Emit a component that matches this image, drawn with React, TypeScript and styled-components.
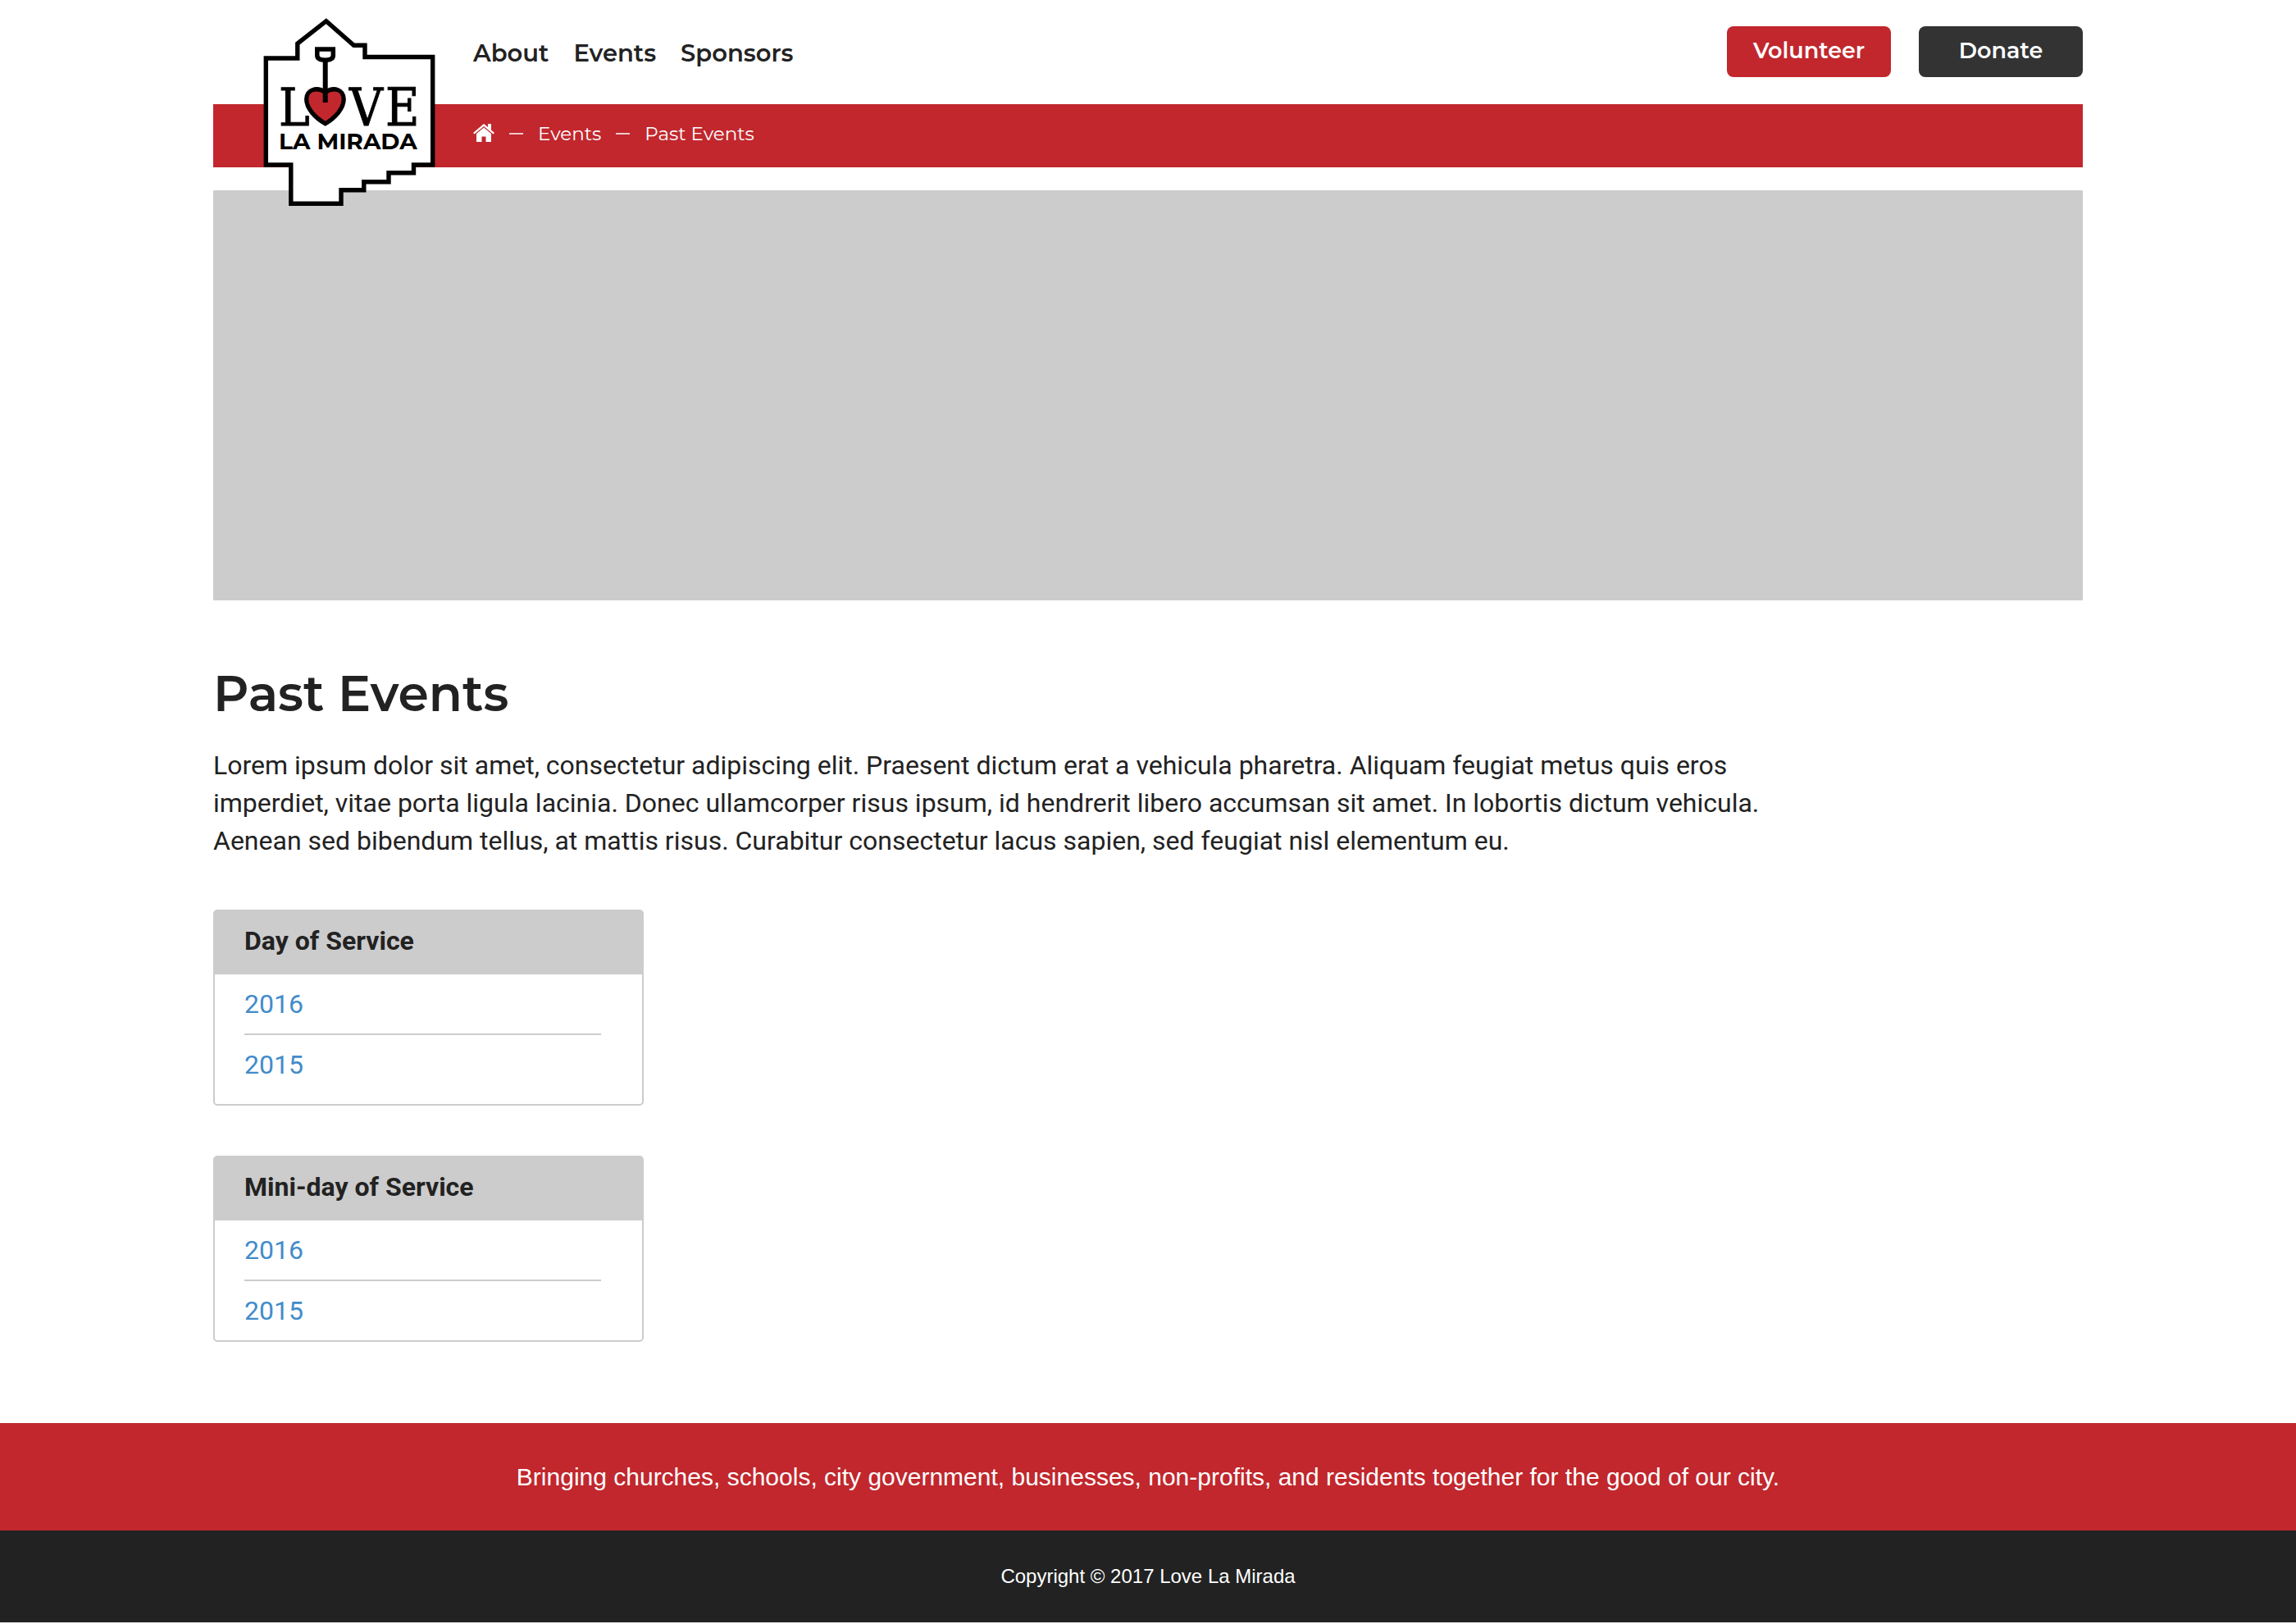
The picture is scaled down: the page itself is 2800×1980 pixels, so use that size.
import React from "react";
import styled, { createGlobalStyle } from "styled-components";

const red = "#c1272d";
const ink = "#222222";
const grey = "#cccccc";
const heading = `Montserrat, Inter, "Open Sans", sans-serif`;
const slab = `"DejaVu Serif Condensed", "DejaVu Serif", serif`;

const GlobalStyle = createGlobalStyle`
  *, *::before, *::after { box-sizing: border-box; }
  body {
    margin: 0;
    background: #ffffff;
    color: ${ink};
    font: 400 32px/46px Roboto, "Noto Sans", sans-serif;
  }
  a { text-decoration: none; }
`;

const Container = styled.div`
  max-width: 2280px;
  margin: 0 auto;
`;

const Header = styled.header`
  position: relative;
  margin-bottom: 28px;
`;

const LogoLink = styled.a`
  position: absolute;
  top: 20px;
  left: 60px;
  display: block;
  line-height: 0;
`;

const TopBar = styled.div`
  display: flex;
  justify-content: space-between;
  align-items: flex-start;
  padding: 32px 0 33px 317px;
`;

const Nav = styled.nav`
  display: flex;
  gap: 30px;
  padding-top: 13px;
`;

const NavLink = styled.a`
  color: ${ink};
  font: 600 29px/40px ${heading};
`;

const Actions = styled.div`
  display: flex;
  gap: 34px;
`;

const ActionButton = styled.button<{ $tone: string }>`
  width: 200px;
  height: 62px;
  padding: 0 0 2px;
  border: 0;
  border-radius: 8px;
  background: ${(p) => p.$tone};
  color: #ffffff;
  font: 600 27px/40px ${heading};
  cursor: pointer;
`;

const Crumbs = styled.nav`
  background: ${red};
  padding: 16px 0 21px 317px;
`;

const CrumbList = styled.ol`
  display: flex;
  align-items: center;
  gap: 18px;
  margin: 0;
  padding: 0;
  list-style: none;
`;

const Crumb = styled.li`
  display: flex;
  align-items: center;
  gap: 18px;
  color: #ffffff;
  font: 400 23px/40px ${heading};

  & + &::before {
    content: "";
    width: 17px;
    height: 2px;
    background: #f0c9cb;
  }

  a {
    display: flex;
    color: inherit;
  }
`;

const Hero = styled.div`
  height: 500px;
  background: ${grey};
`;

const Title = styled.h1`
  margin: 74px 0 24px;
  font: 600 60px/80px ${heading};
`;

const Intro = styled.p`
  max-width: 1900px;
  margin: 0 0 61px;
`;

const Cards = styled.div`
  display: flex;
  flex-direction: column;
  align-items: flex-start;
  gap: 61px;
  margin-bottom: 99px;
`;

const Card = styled.section<{ $roomy?: boolean }>`
  width: 100%;
  max-width: 525px;
  padding-bottom: ${(p) => (p.$roomy ? "12px" : "0")};
  border: 2px solid ${grey};
  border-radius: 5px;
`;

const CardTitle = styled.h2`
  margin: 0;
  padding: 13px 36px 18px;
  background: ${grey};
  font: 700 32px/46px Roboto, "Noto Sans", sans-serif;
`;

const YearList = styled.ul`
  margin: 0;
  padding: 0 50px 0 36px;
  list-style: none;
`;

const Year = styled.li`
  padding: 13px 0;

  & + & {
    border-top: 2px solid ${grey};
  }

  a { color: #428bca; }
`;

const Mission = styled.p`
  margin: 0;
  padding: 46px 20px 45px;
  background: ${red};
  color: #ffffff;
  text-align: center;
  font: 400 30px/40px "Liberation Sans", Arial, sans-serif;
`;

const Copyright = styled.p`
  margin: 0;
  padding: 36px 20px;
  background: ${ink};
  color: #ffffff;
  text-align: center;
  font: 400 24px/40px "Liberation Sans", Arial, sans-serif;
`;

const Logo = () => (
  <svg width="212" height="232" viewBox="320 20 212 232" role="img" aria-label="Love La Mirada">
    <path
      d="M324.300 71H362.800V53L397.800 25.700L431.500 55.300H445V69.500H527.700V201H504.500V210.700H474V221.700H443.800V231.700H416V248.200H354.800V201H324.300Z"
      fill="#fff"
      stroke="#000"
      strokeWidth="5.400"
    />
    <g stroke="#000" fill="none">
      <path d="M386.800 60H406.300V67.500C406.300 71.500 402 73.200 396.600 73.200C391 73.200 386.800 71.500 386.800 67.500Z" strokeWidth="5.500" />
      <path
        d="M396.700 150.700C384 143.500 373.700 132 373.700 121C373.700 109.500 386 105 396.700 112.500C407.500 105 419.200 109.500 419.200 121C419.200 132 409 143.500 396.700 150.700Z"
        fill={red}
        strokeWidth="5.300"
      />
      <path d="M396.700 74V125" strokeWidth="6" />
    </g>
    <g fontFamily={slab} fontSize="63" fill="#000" stroke="#000" strokeWidth="1">
      <text x="340" y="153">L</text>
      <text x="426" y="153">V</text>
      <text x="470" y="153">E</text>
    </g>
    <text x="340" y="182" fontFamily={heading} fontWeight="700" fontSize="28" fill="#000">
      LA MIRADA
    </text>
  </svg>
);

const HomeIcon = () => (
  <svg width="26" height="24" viewBox="0 0 26 24" aria-hidden="true" fill="#fff">
    <path d="M13 4.500L4 12V22H10.500V15.500H15.500V22H22V12Z" />
    <path d="M13 0L0 11L1.500 12.500L13 3L24.500 12.500L26 11L22 7.500V0H18V4Z" />
  </svg>
);

const years = ["2016", "2015"];

const EventCard = ({ title, roomy }: { title: string; roomy?: boolean }) => (
  <Card $roomy={roomy}>
    <CardTitle>{title}</CardTitle>
    <YearList>
      {years.map((year) => (
        <Year key={year}>
          <a href="#">{year}</a>
        </Year>
      ))}
    </YearList>
  </Card>
);

export default function App() {
  return (
    <>
      <GlobalStyle />
      <Container>
        <Header>
          <TopBar>
            <Nav aria-label="Main">
              <NavLink href="#">About</NavLink>
              <NavLink href="#">Events</NavLink>
              <NavLink href="#">Sponsors</NavLink>
            </Nav>
            <Actions>
              <ActionButton $tone={red}>Volunteer</ActionButton>
              <ActionButton $tone="#333333">Donate</ActionButton>
            </Actions>
          </TopBar>
          <Crumbs aria-label="Breadcrumb">
            <CrumbList>
              <Crumb>
                <a href="#" aria-label="Home">
                  <HomeIcon />
                </a>
              </Crumb>
              <Crumb>
                <a href="#">Events</a>
              </Crumb>
              <Crumb>Past Events</Crumb>
            </CrumbList>
          </Crumbs>
          <LogoLink href="#">
            <Logo />
          </LogoLink>
        </Header>
        <main>
          <Hero />
          <Title>Past Events</Title>
          <Intro>
            Lorem ipsum dolor sit amet, consectetur adipiscing elit. Praesent dictum erat a vehicula pharetra. Aliquam
            feugiat metus quis eros imperdiet, vitae porta ligula lacinia. Donec ullamcorper risus ipsum, id hendrerit
            libero accumsan sit amet. In lobortis dictum vehicula. Aenean sed bibendum tellus, at mattis risus.
            Curabitur consectetur lacus sapien, sed feugiat nisl elementum eu.
          </Intro>
          <Cards>
            <EventCard title="Day of Service" roomy />
            <EventCard title="Mini-day of Service" />
          </Cards>
        </main>
      </Container>
      <footer>
        <Mission>
          Bringing churches, schools, city government, businesses, non-profits, and residents together for the good of
          our city.
        </Mission>
        <Copyright>Copyright © 2017 Love La Mirada</Copyright>
      </footer>
    </>
  );
}
